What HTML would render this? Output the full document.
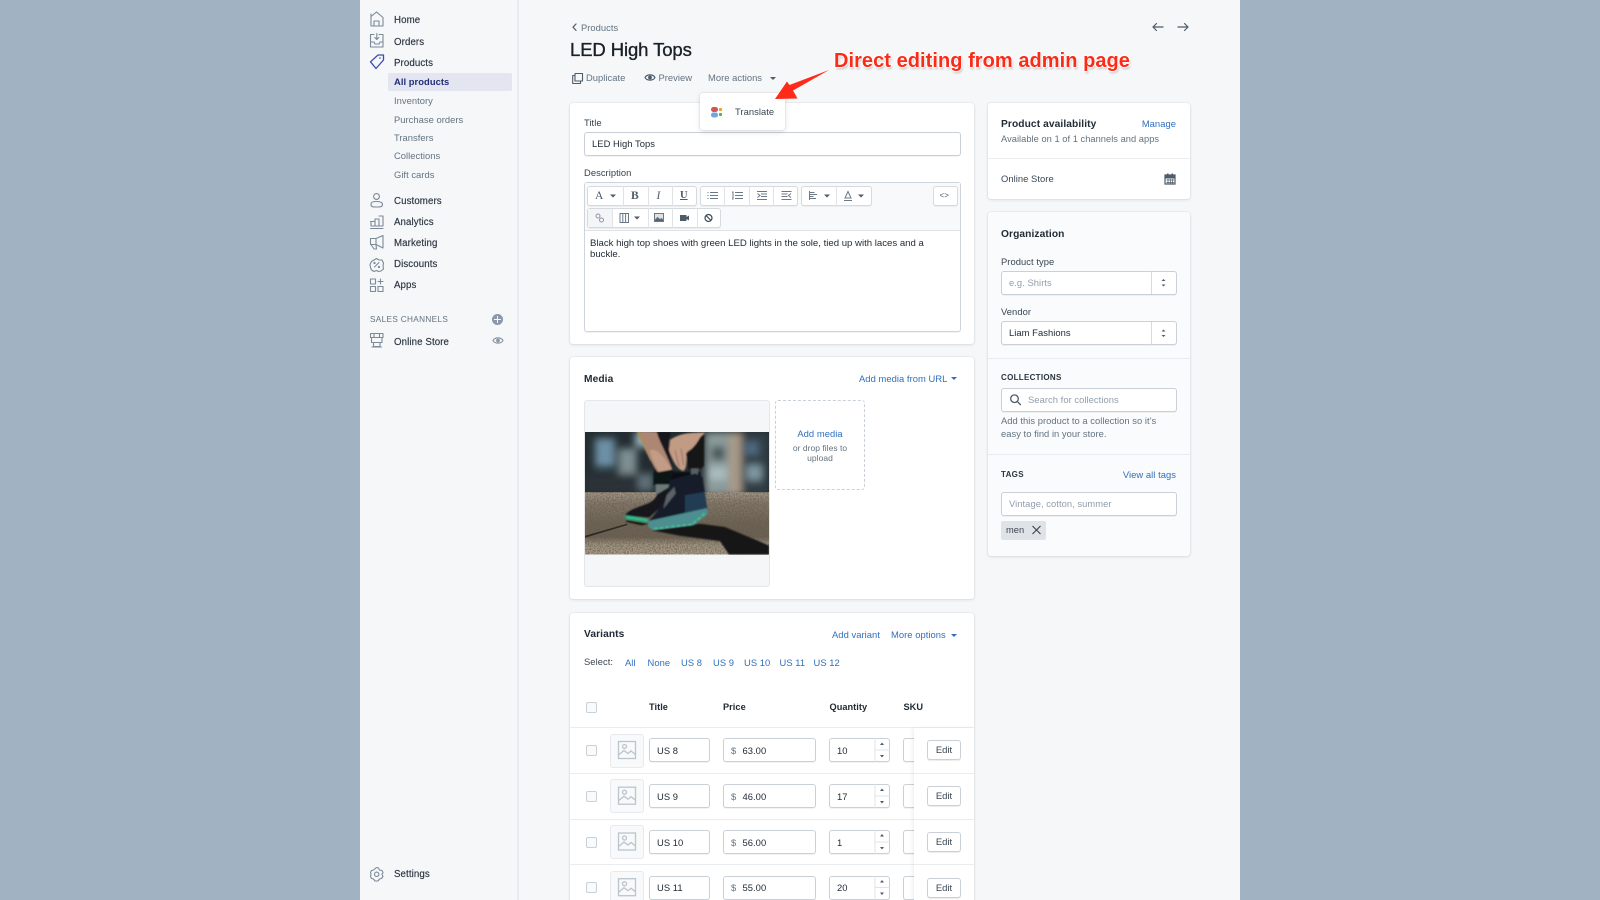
<!DOCTYPE html>
<html><head><meta charset="utf-8"><title>LED High Tops</title>
<style>
*{box-sizing:border-box}
html,body{margin:0;padding:0;width:1600px;height:900px;overflow:hidden;background:#a1b3c3;font-family:"Liberation Sans",sans-serif}
#p{position:absolute;left:360px;top:0;width:880px;height:900px;background:#f5f7f9;overflow:hidden}
#r{position:absolute;left:0;top:0;width:1600px;height:900px;overflow:hidden;filter:blur(.3px)}
.t{position:absolute;white-space:nowrap;line-height:14px;font-size:9.400px;color:#212b36;letter-spacing:.05px;margin-top:1.300px}
.n{color:#2a3440;font-size:9.700px;letter-spacing:.1px;-webkit-text-stroke:.15px #2a3440}
.s{color:#637381;font-size:9.400px;letter-spacing:.03px}
.b{color:#2f6fbd;letter-spacing:.05px}
.h{font-size:11px;letter-spacing:.1px}
.c{position:absolute;background:#fff;border-radius:3px;box-shadow:0 0 0 1px rgba(63,63,68,.04),0 1px 3px rgba(63,63,68,.12)}
.i{position:absolute;background:#fff;border:1px solid #c9d0d8;border-radius:3px;box-shadow:0 1px 0 rgba(22,29,37,.05)}
.d{position:absolute;height:1px;background:#e9edf0}
.v{position:absolute;left:0;top:0}
.k{position:absolute;width:11px;height:11px;border:1px solid #c9d0d8;border-radius:2px;background:#f9fafb;left:586px}
.x{position:absolute;background:#dfe3e8;width:1px}
.e{position:absolute;left:927px;width:34px;height:20px;background:#fff;border:1px solid #c9d0d8;border-radius:3px;box-shadow:0 1px 0 rgba(22,29,37,.08);font-size:9.500px;line-height:20px;text-align:center;color:#3a4652}
.m{position:absolute;left:610px;width:34px;height:34px;background:#f7f9fa;border:1px solid #e6eaee;border-radius:3px}
</style></head><body>
<div id="p"></div>
<div id="r">
<div style="position:absolute;left:517px;top:0;width:1.5px;height:900px;background:#e9ecef"></div>

<div style="position:absolute;left:388px;top:73px;width:124px;height:18px;background:#e3e6f1;border-radius:2px"></div>
<span class="t n" style="left:394px;top:13px">Home</span>
<span class="t n" style="left:394px;top:34.500px">Orders</span>
<span class="t n" style="left:394px;top:56px">Products</span>
<span class="t" style="left:394px;top:74px;color:#202e78;font-weight:700;font-size:9.400px;letter-spacing:.05px">All products</span>
<span class="t s" style="left:394px;top:93px">Inventory</span>
<span class="t s" style="left:394px;top:111.500px">Purchase orders</span>
<span class="t s" style="left:394px;top:130px">Transfers</span>
<span class="t s" style="left:394px;top:148px">Collections</span>
<span class="t s" style="left:394px;top:167px">Gift cards</span>
<span class="t n" style="left:394px;top:193.500px">Customers</span>
<span class="t n" style="left:394px;top:215px">Analytics</span>
<span class="t n" style="left:394px;top:236px">Marketing</span>
<span class="t n" style="left:394px;top:257px">Discounts</span>
<span class="t n" style="left:394px;top:278px">Apps</span>
<span class="t" style="left:370px;top:312px;color:#637381;font-size:8.200px;letter-spacing:.35px">SALES CHANNELS</span>
<span class="t n" style="left:394px;top:334.500px">Online Store</span>
<span class="t n" style="left:394px;top:867px">Settings</span>

<svg class="v" width="1600" height="900" fill="none" stroke="#7d8a99" stroke-width="1.1" stroke-linejoin="round" stroke-linecap="round">
<path d="M371 25V16.500L376.500 12 383 17.500V26H371ZM374 26V21H379V26M371 14V17"/>
<path d="M370.500 34.500H374M379 34.500H383V47H370.500V34.500M370.500 42H374L375 44H379L380 42H383M376.800 33.500V39.500M374.800 37.500L376.800 39.500 378.800 37.500"/>
<path d="M370.500 61.800L378 55H383.500V60L376 68.500Z" stroke="#3d4bb0" stroke-width="1.300"/><circle cx="380" cy="58" r=".8" fill="#3d4bb0" stroke="none"/>
<circle cx="376.500" cy="196.500" r="2.900"/><path d="M371 204.500C371 202 373 201.500 376.500 201.500S382.500 202 382.500 204.500 380 207 376.500 207 371 207 371 204.500Z"/>
<path d="M370.500 221.500H375V226M375 226V219H379V226M379 216H383V226H371V221.500M370.500 228.500H383"/>
<path d="M370.500 238.500H376L383 235.500V248L376 244.500H370.500ZM371 244.500L374 249H376.500L376 244.500M376 238.500V244.500"/>
<path d="M376.500 258.500L379 260H382L383.500 263 383 266 383.500 269 381 271 378.500 271.500 376.500 270.500 374 271.500 371.500 270 370.500 267.500 370 264.500 371.500 261.500 374 260Z"/><path d="M374.500 267L379 262.500"/><circle cx="374.500" cy="263" r=".6"/><circle cx="379" cy="267" r=".6"/>
<rect x="370.500" y="279" width="5" height="5"/><rect x="370.500" y="286.500" width="5" height="5"/><rect x="378" y="286.500" width="5" height="5"/><path d="M378 281.500H383M380.500 279V284"/>
<path d="M370.500 333.500H383V337.500H370.500ZM371.500 337.500V342.500H382V337.500M374 333.500V337.500M379.500 333.500V337.500M373.500 342.500V346.500H380V342.500M372 347H381.500"/>
<path d="M376.500 867.500L378.500 868 379.500 870 382 870.500 383 872.500 382 874.500 383 876.500 381.500 878.500 379.500 879 378 881H375L373.500 879 371.500 878.500 370.500 876.500 371 874.500 370.500 872.500 371.500 870.500 373.500 870Z"/><circle cx="376.700" cy="874.300" r="2.200"/>
</svg>
<div style="position:absolute;left:492px;top:314px;width:11px;height:11px;border-radius:50%;background:#8b98a8"></div>
<div style="position:absolute;left:494px;top:319px;width:7px;height:1.300px;background:#f5f7f9"></div>
<div style="position:absolute;left:497px;top:316px;width:1.300px;height:7px;background:#f5f7f9"></div>
<svg class="v" width="1600" height="900" fill="none" stroke="#8b98a8" stroke-width="1.200"><path d="M493 340.500C495 337 501 337 503 340.500 501 344 495 344 493 340.500Z"/><circle cx="498" cy="340.500" r="1.300" fill="#8b98a8"/></svg>

<!-- header -->
<svg class="v" width="1600" height="900" fill="none" stroke="#4e5b69" stroke-width="1.200" stroke-linecap="round" stroke-linejoin="round">
<path d="M576 24L573 27.200 576 30.400"/>
<path d="M1163 27H1153M1156.500 23.500L1153 27 1156.500 30.500M1178 27H1188M1184.500 23.500L1188 27 1184.500 30.500"/>
<path d="M575 73.500H582.500V81H575ZM575 75.500H572.700V83.500H580.500V81" stroke-width="1.100"/>
<path d="M645 77.500C647 74 653 74 655 77.500 653 81 647 81 645 77.500Z"/><circle cx="650" cy="77.500" r="1.300" fill="#4e5b69"/>
</svg>
<span class="t s" style="left:581px;top:20px">Products</span>
<span class="t" style="left:570px;top:38px;font-size:18.500px;line-height:22px;color:#1a2128;letter-spacing:-.1px;-webkit-text-stroke:.35px #1a2128">LED High Tops</span>
<span class="t s" style="left:586px;top:70px">Duplicate</span>
<span class="t s" style="left:658.500px;top:70px">Preview</span>
<span class="t s" style="left:708px;top:70px">More actions</span>
<div style="position:absolute;left:770px;top:76.500px;border:3px solid transparent;border-top:3.500px solid #4e5b69;border-bottom:0"></div>

<!-- title card -->
<div class="c" style="left:570px;top:103px;width:404px;height:241px"></div>
<span class="t" style="left:584px;top:115px;color:#35404c">Title</span>
<div class="i" style="left:584px;top:132px;width:377px;height:24px"></div>
<span class="t" style="left:592px;top:136px">LED High Tops</span>
<span class="t" style="left:584px;top:165px;color:#35404c">Description</span>
<div style="position:absolute;left:584px;top:182px;width:377px;height:150px;border:1px solid #cdd4db;border-radius:3px;background:#fff;box-shadow:0 1px 0 rgba(22,29,37,.05)"></div>
<div style="position:absolute;left:585px;top:183px;width:375px;height:48px;background:#f7f9fb;border-bottom:1px solid #dfe3e8"></div>

<div class="i" style="left:587px;top:186px;width:110px;height:20px;border-color:#d5dade"></div>
<div class="i" style="left:699.500px;top:186px;width:98.500px;height:20px;border-color:#d5dade"></div>
<div class="i" style="left:800.500px;top:186px;width:71px;height:20px;border-color:#d5dade"></div>
<div class="i" style="left:932.500px;top:186px;width:25px;height:20px;border-color:#d5dade"></div>
<div class="i" style="left:587px;top:208px;width:134px;height:20px;border-color:#d5dade"></div>
<div style="position:absolute;left:588px;top:209px;width:24px;height:18px;background:#f3f5f7"></div>
<div class="x" style="left:622.500px;top:186px;height:20px"></div><div class="x" style="left:647.500px;top:186px;height:20px"></div><div class="x" style="left:672px;top:186px;height:20px"></div>
<div class="x" style="left:724px;top:186px;height:20px"></div><div class="x" style="left:748.500px;top:186px;height:20px"></div><div class="x" style="left:773px;top:186px;height:20px"></div>
<div class="x" style="left:836px;top:186px;height:20px"></div>
<div class="x" style="left:612px;top:208px;height:20px"></div><div class="x" style="left:647.500px;top:208px;height:20px"></div><div class="x" style="left:672px;top:208px;height:20px"></div><div class="x" style="left:696.500px;top:208px;height:20px"></div>
<span class="t" style="left:595px;top:188px;font-family:'Liberation Serif',serif;font-size:11.500px;color:#4e5b69">A</span>
<span class="t" style="left:631px;top:188px;font-family:'Liberation Serif',serif;font-size:11.500px;font-weight:700;color:#4e5b69">B</span>
<span class="t" style="left:656.500px;top:188px;font-family:'Liberation Serif',serif;font-size:11.500px;font-style:italic;color:#4e5b69">I</span>
<span class="t" style="left:680px;top:187.500px;font-family:'Liberation Serif',serif;font-size:10.500px;font-weight:700;color:#4e5b69;text-decoration:underline">U</span>
<span class="t" style="left:939.500px;top:188px;font-size:8px;color:#4e5b69">&lt;&gt;</span>
<svg class="v" width="1600" height="900" fill="none" stroke="#6b7886" stroke-width="1">
<path fill="#4e5b69" stroke="none" d="M610 194.500H616L613 197.500ZM824 194.500H830L827 197.500ZM858 194.500H864L861 197.500ZM634 216.500H640L637 219.500Z"/>
<path d="M710 192.500H718M710 195.500H718M710 198.500H718M707.500 192.500H708.500M707.500 195.500H708.500M707.500 198.500H708.500"/>
<path d="M735 192.500H743M735 195.500H743M735 198.500H743M732 192H733V199H732"/>
<path d="M757 191.500H767M761 194H767M761 196.500H767M757 199.500H767M757.500 193.500L760 195.500 757.500 197.500"/>
<path d="M781.500 191.500H791.500M781.500 194H787.500M781.500 196.500H787.500M781.500 199.500H791.500M791 193.500L788.500 195.500 791 197.500"/>
<path d="M809.500 191V200M809.500 192.500H814.500M809.500 194.500H817M809.500 196.500H813.500M809.500 198.500H816"/>
<path d="M848 191.500L845 198H851ZM844 200.500H852"/>
<circle cx="598" cy="216" r="2" stroke="#8b98a8"/><circle cx="601.500" cy="220" r="2" stroke="#8b98a8"/>
<path d="M620 213.500H628.500V222.500H620ZM622.800 213.500V222.500M625.600 213.500V222.500"/>
<rect x="654.500" y="213.500" width="9" height="8" fill="#dfe3e8"/><path d="M654.500 220.500L657.500 217.500 660 219.500 661.500 218.500 663.500 220.500V221.500H654.500Z" fill="#55626f"/>
<rect x="680" y="215" width="6.500" height="6" fill="#4e5b69" stroke="none"/><path d="M686.500 217L689 215.500V220.500L686.500 219Z" fill="#4e5b69" stroke="none"/>
<circle cx="708.500" cy="218" r="3.500" stroke-width="1.200" stroke="#3d4955"/><path d="M706 215.500L711 220.500" stroke-width="1.200" stroke="#3d4955"/>
</svg>
<span class="t" style="left:590px;top:237px;font-size:9.600px;line-height:11px;letter-spacing:0;color:#1f2933">Black high top shoes with green LED lights in the sole, tied up with laces and a<br>buckle.</span>

<!-- dropdown -->
<div class="c" style="left:700px;top:93px;width:85px;height:37px;box-shadow:0 0 0 1px rgba(63,63,68,.05),0 2px 6px rgba(63,63,68,.15)"></div>
<svg class="v" width="1600" height="900"><rect x="711" y="107" width="7" height="5" rx="2.400" fill="#d9534f"/><rect x="711" y="112.500" width="7" height="5" rx="2.400" fill="#6ea8dc"/><circle cx="720.500" cy="109.500" r="1.600" fill="#e9a23b"/><circle cx="720.500" cy="114.500" r="1.600" fill="#66a85a"/></svg>
<span class="t" style="left:735px;top:104px;color:#3a4652">Translate</span>

<!-- media card -->
<div class="c" style="left:570px;top:357px;width:404px;height:242px"></div>
<span class="t h" style="left:584px;top:372px;font-weight:700;font-size:10.200px">Media</span>
<span class="t b" style="left:859px;top:371px">Add media from URL</span>
<div style="position:absolute;left:951px;top:376.500px;border:3px solid transparent;border-top:3.500px solid #2f6fbd;border-bottom:0"></div>
<div style="position:absolute;left:584px;top:400px;width:185.500px;height:186.500px;background:#f4f6f8;border:1px solid #e3e7ea;border-radius:3px"></div>
<svg style="position:absolute;left:585px;top:432px" width="184" height="122.500" viewBox="0 6 552 366" preserveAspectRatio="none">
<defs>
<filter id="f1" x="-30%" y="-30%" width="160%" height="160%"><feGaussianBlur stdDeviation="11"/></filter>
<filter id="f2" x="-10%" y="-10%" width="120%" height="120%"><feGaussianBlur stdDeviation="2.200"/></filter>
<filter id="f3" x="0" y="0" width="100%" height="100%"><feTurbulence type="fractalNoise" baseFrequency=".22" numOctaves="2" seed="4"/><feColorMatrix values="0 0 0 0 .12  0 0 0 0 .10  0 0 0 0 .07  1.800 0 0 0 -.65"/></filter>
<linearGradient id="g" x1="0" y1="0" x2="0" y2="1"><stop offset="0" stop-color="#a5998a"/><stop offset=".18" stop-color="#83786a"/><stop offset=".5" stop-color="#6e6355"/><stop offset=".72" stop-color="#6b6053"/><stop offset=".84" stop-color="#a0937f"/><stop offset="1" stop-color="#a99b87"/></linearGradient>
</defs>
<rect x="0" y="6" width="552" height="190" fill="#232d31"/>
<g filter="url(#f1)">
<rect x="30" y="25" width="60" height="85" fill="#6d8fa5"/>
<rect x="100" y="55" width="55" height="80" fill="#7d8e90"/>
<rect x="150" y="6" width="55" height="45" fill="#9ab3c0"/>
<rect x="0" y="130" width="200" height="60" fill="#2a3337"/>
<rect x="160" y="130" width="45" height="50" fill="#5f7077"/>
<rect x="360" y="6" width="75" height="190" fill="#8b9a9a"/>
<rect x="380" y="50" width="40" height="40" fill="#47555a"/>
<rect x="370" y="110" width="55" height="40" fill="#a9bcbf"/>
<rect x="432" y="6" width="38" height="190" fill="#a79a88"/>
<rect x="470" y="6" width="82" height="190" fill="#323d45"/>
<rect x="485" y="105" width="45" height="45" fill="#7f97a2"/>
<rect x="480" y="35" width="40" height="40" fill="#506b80"/>
</g>
<rect x="0" y="186" width="552" height="186" fill="url(#g)"/>
<rect x="0" y="186" width="552" height="186" filter="url(#f3)"/>
<path d="M0 316L125 280 128 284 0 322Z" fill="#2f2a22"/>
<path d="M122 268L190 280 170 285 125 275Z" fill="#17140f" filter="url(#f2)"/>
<path d="M200 300L345 280 420 290 552 345V372H432L405 332 285 316Z" fill="#141417" filter="url(#f2)"/>
<g filter="url(#f2)">
<path d="M215 6H258L250 45 265 125 205 135 215 60Z" fill="#16191c"/>
<path d="M155 6H165L205 90 196 92Z" fill="#a98f55"/>
<path d="M165 6H215C225 40 245 70 262 118 250 132 235 140 222 128 200 110 185 60 165 6Z" fill="#ad8773"/>
<path d="M195 60C215 55 235 75 258 115 250 128 238 135 224 126 208 105 200 85 195 60Z" fill="#c29c86"/>
<path d="M255 30C285 8 325 8 360 8 345 35 325 55 307 65 302 90 308 115 295 122 275 118 262 90 252 60Z" fill="#c29b85"/>
<path d="M270 60L282 110M288 55L296 105" stroke="#8d6a58" stroke-width="2.500" fill="none"/>
<path d="M345 22L358 10 357 108 345 118H310L303 70C320 58 335 42 345 22Z" fill="#141719"/>
<path d="M205 128L262 118 260 165 205 165Z" fill="#111416"/>
<path d="M212 163H252L248 190 212 195Z" fill="#6e7a78"/>
<path d="M262 125H345L352 185 255 190Z" fill="#0d1114"/>
<path d="M318 115H342L338 135 318 140Z" fill="#565f62"/>
<path d="M216 192L250 172 256 205 192 262 120 255C128 238 168 228 192 218 208 210 214 200 216 192Z" fill="#12161b"/>
<path d="M255 150L330 130 352 140 360 190 367 236 190 274C202 258 245 220 255 150Z" fill="#161f29"/>
<path d="M300 195L360 185 366 235 300 250Z" fill="#223c52"/>
<path d="M245 195L268 170 272 190 235 235Z" fill="#5a6266"/>
<path d="M120 254L190 266 188 278 122 268Z" fill="#2f9a7a"/>
<path d="M190 272L365 234 369 250 325 285 205 300 190 290Z" fill="#4d8e90"/>
<path d="M208 295L320 282 362 248" stroke="#3dc995" stroke-width="5" fill="none" stroke-dasharray="10 7"/>
<path d="M125 260L188 270" stroke="#35d08f" stroke-width="4" fill="none"/>
</g>
</svg>
<div style="position:absolute;left:775px;top:400px;width:90px;height:90px;border:1px dashed #c9d0d8;border-radius:3px"></div>
<span class="t b" style="left:775px;width:90px;text-align:center;top:426px">Add media</span>
<span class="t s" style="left:775px;width:90px;text-align:center;top:441.500px;font-size:8.500px;line-height:10px">or drop files to</span>
<span class="t s" style="left:775px;width:90px;text-align:center;top:452px;font-size:8.500px;line-height:10px">upload</span>

<!-- variants -->
<div class="c" style="left:570px;top:613px;width:404px;height:300px"></div>
<span class="t h" style="left:584px;top:627px;font-weight:700;font-size:10.200px">Variants</span>
<span class="t b" style="left:832px;top:627px">Add variant</span>
<span class="t b" style="left:891px;top:627px">More options</span>
<div style="position:absolute;left:951px;top:633.500px;border:3px solid transparent;border-top:3.500px solid #2f6fbd;border-bottom:0"></div>
<span class="t" style="left:584px;top:654px;color:#3a4652">Select:</span>
<span class="t b" style="left:625px;top:655px">All</span>
<span class="t b" style="left:647.500px;top:655px">None</span>
<span class="t b" style="left:681px;top:655px">US 8</span>
<span class="t b" style="left:713px;top:655px">US 9</span>
<span class="t b" style="left:744px;top:655px">US 10</span>
<span class="t b" style="left:779.500px;top:655px">US 11</span>
<span class="t b" style="left:813.500px;top:655px">US 12</span>
<div class="k" style="top:702px"></div>
<b class="t" style="left:649px;top:699px;font-size:9.200px">Title</b>
<b class="t" style="left:723px;top:699px;font-size:9.200px">Price</b>
<b class="t" style="left:829.500px;top:699px;font-size:9.200px">Quantity</b>
<b class="t" style="left:903.500px;top:699px;font-size:9.200px">SKU</b>
<div class="d" style="left:570px;top:727px;width:404px"></div>
<div class="d" style="left:570px;top:773px;width:404px"></div>
<div class="d" style="left:570px;top:818.500px;width:404px"></div>
<div class="d" style="left:570px;top:864px;width:404px"></div>

<div class="k" style="top:745px"></div><div class="m" style="top:733.500px"></div>
<div class="i" style="left:649px;top:738px;width:61px;height:24px"></div><span class="t" style="left:657px;top:742.500px">US 8</span>
<div class="i" style="left:723px;top:738px;width:93px;height:24px"></div><span class="t s" style="left:731px;top:742.500px">$</span><span class="t" style="left:742.500px;top:742.500px">63.00</span>
<div class="i" style="left:829px;top:738px;width:61px;height:24px"></div><span class="t" style="left:837px;top:742.500px">10</span>
<div class="i" style="left:903px;top:738px;width:30px;height:24px"></div>

<div class="k" style="top:791px"></div><div class="m" style="top:779px"></div>
<div class="i" style="left:649px;top:784px;width:61px;height:24px"></div><span class="t" style="left:657px;top:788.500px">US 9</span>
<div class="i" style="left:723px;top:784px;width:93px;height:24px"></div><span class="t s" style="left:731px;top:788.500px">$</span><span class="t" style="left:742.500px;top:788.500px">46.00</span>
<div class="i" style="left:829px;top:784px;width:61px;height:24px"></div><span class="t" style="left:837px;top:788.500px">17</span>
<div class="i" style="left:903px;top:784px;width:30px;height:24px"></div>

<div class="k" style="top:836.500px"></div><div class="m" style="top:825px"></div>
<div class="i" style="left:649px;top:830px;width:61px;height:24px"></div><span class="t" style="left:657px;top:834.500px">US 10</span>
<div class="i" style="left:723px;top:830px;width:93px;height:24px"></div><span class="t s" style="left:731px;top:834.500px">$</span><span class="t" style="left:742.500px;top:834.500px">56.00</span>
<div class="i" style="left:829px;top:830px;width:61px;height:24px"></div><span class="t" style="left:837px;top:834.500px">1</span>
<div class="i" style="left:903px;top:830px;width:30px;height:24px"></div>

<div class="k" style="top:882px"></div><div class="m" style="top:871px"></div>
<div class="i" style="left:649px;top:875.500px;width:61px;height:24px"></div><span class="t" style="left:657px;top:880px">US 11</span>
<div class="i" style="left:723px;top:875.500px;width:93px;height:24px"></div><span class="t s" style="left:731px;top:880px">$</span><span class="t" style="left:742.500px;top:880px">55.00</span>
<div class="i" style="left:829px;top:875.500px;width:61px;height:24px"></div><span class="t" style="left:837px;top:880px">20</span>
<div class="i" style="left:903px;top:875.500px;width:30px;height:24px"></div>

<svg class="v" width="1600" height="900" fill="none" stroke="#bcc5cd" stroke-width="1.300">
<g><rect x="618.500" y="741.500" width="17" height="17"/><circle cx="624.500" cy="746.500" r="2"/><path d="M618.500 755L624 750.500 628 753.500 631 751 635.500 754.500"/></g>
<g transform="translate(0 45.700)"><rect x="618.500" y="741.500" width="17" height="17"/><circle cx="624.500" cy="746.500" r="2"/><path d="M618.500 755L624 750.500 628 753.500 631 751 635.500 754.500"/></g>
<g transform="translate(0 91.500)"><rect x="618.500" y="741.500" width="17" height="17"/><circle cx="624.500" cy="746.500" r="2"/><path d="M618.500 755L624 750.500 628 753.500 631 751 635.500 754.500"/></g>
<g transform="translate(0 137.200)"><rect x="618.500" y="741.500" width="17" height="17"/><circle cx="624.500" cy="746.500" r="2"/><path d="M618.500 755L624 750.500 628 753.500 631 751 635.500 754.500"/></g>
<g stroke="#dfe3e8" stroke-width="1">
<path d="M875 738V762M875 750H890M875 784V808M875 796H890M875 830V854M875 842H890M875 875.500V899.500M875 887.500H890"/>
</g>
<path fill="#4e5b69" stroke="none" d="M880 745H884L882 742.500ZM880 755H884L882 757.500ZM880 791H884L882 788.500ZM880 801H884L882 803.500ZM880 836.500H884L882 834ZM880 847H884L882 849.500ZM880 882.500H884L882 880ZM880 892.500H884L882 895Z"/>
</svg>
<!-- sticky edit column -->
<div style="position:absolute;left:913.500px;top:728px;width:60px;height:172px;background:#fff;box-shadow:-2px 0 3px rgba(63,63,68,.07)"></div>
<div class="d" style="left:914px;top:773px;width:60px"></div>
<div class="d" style="left:914px;top:818.500px;width:60px"></div>
<div class="d" style="left:914px;top:864px;width:60px"></div>
<div class="e" style="top:740px">Edit</div>
<div class="e" style="top:786px">Edit</div>
<div class="e" style="top:832px">Edit</div>
<div class="e" style="top:877.500px">Edit</div>

<!-- right col -->
<div class="c" style="left:988px;top:103px;width:202px;height:96px"></div>
<span class="t h" style="left:1001px;top:117px;font-weight:700;font-size:10.200px">Product availability</span>
<span class="t b" style="left:1120px;width:56px;text-align:right;top:116px">Manage</span>
<span class="t s" style="left:1001px;top:131px;font-size:9.300px">Available on 1 of 1 channels and apps</span>
<div class="d" style="left:988px;top:158px;width:202px"></div>
<span class="t" style="left:1001px;top:171px;color:#3a4652">Online Store</span>
<svg class="v" width="1600" height="900" fill="none"><path d="M1165 175H1175V184H1165Z" stroke="#4e5b69" stroke-width="1.200"/><path d="M1165 175H1175V178.500H1165ZM1167 173.500H1168.500V175.500H1167ZM1171.500 173.500H1173V175.500H1171.500Z" fill="#4e5b69"/><path d="M1166.500 180H1174M1166.500 182.500H1174M1168 179V184M1170.300 179V184M1172.600 179V184" stroke="#4e5b69" stroke-width=".7"/></svg>

<div class="c" style="left:988px;top:212px;width:202px;height:344px;background:#f9fbfc"></div>
<span class="t h" style="left:1001px;top:227px;font-weight:700;font-size:10.200px">Organization</span>
<span class="t" style="left:1001px;top:253.500px;color:#3a4652">Product type</span>
<div class="i" style="left:1001px;top:270.500px;width:175.500px;height:24px"></div>
<div class="x" style="left:1151px;top:271px;height:23px;background:#d5dade"></div>
<span class="t" style="left:1009px;top:274.500px;color:#919eab">e.g. Shirts</span>
<span class="t" style="left:1001px;top:304px;color:#3a4652">Vendor</span>
<div class="i" style="left:1001px;top:321px;width:175.500px;height:24px"></div>
<div class="x" style="left:1151px;top:321.500px;height:23px;background:#d5dade"></div>
<span class="t" style="left:1009px;top:325px">Liam Fashions</span>
<svg class="v" width="1600" height="900"><path fill="#4e5b69" d="M1161.500 281H1165.500L1163.500 279ZM1161.500 284.500H1165.500L1163.500 286.500ZM1161.500 331.500H1165.500L1163.500 329.500ZM1161.500 335H1165.500L1163.500 337Z"/></svg>
<div class="d" style="left:988px;top:357.500px;width:202px"></div>
<b class="t" style="left:1001px;top:369.500px;font-size:8px;letter-spacing:.3px;color:#2a3440">COLLECTIONS</b>
<div class="i" style="left:1001px;top:388px;width:175.500px;height:24px"></div>
<svg class="v" width="1600" height="900" fill="none" stroke="#4e5b69" stroke-width="1.300"><circle cx="1014.500" cy="398.700" r="3.800"/><path d="M1017.500 401.700L1020.800 405"/></svg>
<span class="t" style="left:1028px;top:392px;color:#919eab">Search for collections</span>
<span class="t s" style="left:1001px;top:413px">Add this product to a collection so it’s</span>
<span class="t s" style="left:1001px;top:426px">easy to find in your store.</span>
<div class="d" style="left:988px;top:454px;width:202px"></div>
<b class="t" style="left:1001px;top:467px;font-size:8px;letter-spacing:.3px;color:#2a3440">TAGS</b>
<span class="t b" style="left:1100px;width:76px;text-align:right;top:467px">View all tags</span>
<div class="i" style="left:1001px;top:491.500px;width:175.500px;height:24px"></div>
<span class="t" style="left:1009px;top:495.500px;color:#919eab">Vintage, cotton, summer</span>
<div style="position:absolute;left:1001px;top:521px;width:45px;height:18.500px;background:#dfe3e8;border-radius:2px"></div>
<span class="t" style="left:1006px;top:521.500px;font-size:9.300px;color:#3a4652">men</span>
<svg class="v" width="1600" height="900" stroke="#35404c" stroke-width="1.100"><path d="M1032.500 526L1040.500 534M1040.500 526L1032.500 534"/></svg>

<!-- annotation -->
<svg class="v" width="1600" height="900"><path d="M829 70L793 90.500 797.500 98.500 775 99 787 81.500 789.500 85Z" fill="#ff2a17"/></svg>
<span class="t" style="left:834px;top:48px;line-height:24px;font-size:20px;font-weight:700;color:#fa2b17;letter-spacing:.05px;text-shadow:0 1px 1px #fff,1px 0 1px #fff,-1px 0 1px #fff,0 -1px 1px #fff,1px 2px 2px rgba(0,0,0,.25)">Direct editing from admin page</span>
</div>
</body></html>
